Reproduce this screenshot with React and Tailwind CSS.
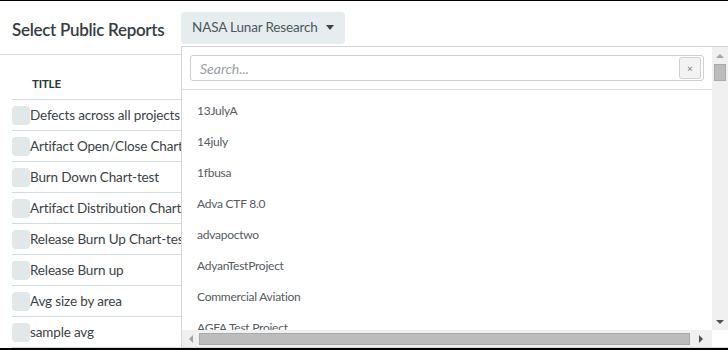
import React from "react";

const rows = [
  "Defects across all projects",
  "Artifact Open/Close Chart",
  "Burn Down Chart-test",
  "Artifact Distribution Chart",
  "Release Burn Up Chart-test",
  "Release Burn up",
  "Avg size by area",
  "sample avg",
];

const items = [
  "13JulyA",
  "14july",
  "1fbusa",
  "Adva CTF 8.0",
  "advapoctwo",
  "AdyanTestProject",
  "Commercial Aviation",
  "AGFA Test Project",
];

const font = { fontFamily: "Lato, 'Open Sans', 'Liberation Sans', sans-serif" };

export default function App() {
  return (
    <div
      className="relative w-[728px] h-[350px] overflow-hidden bg-white border-t border-b-2 border-black"
      style={font}
    >
      {/* header */}
      <div className="flex items-center h-[54px] border-b border-[#d3dde0] pl-3">
        <div className="w-[169px] pt-[3px] text-[17px] tracking-[-0.3px] font-semibold text-[#363d42] leading-none">
          Select Public Reports
        </div>
        <div className="flex items-center justify-between w-[164px] h-8 rounded bg-[#e5edef] pl-[11px] pr-[11px] text-[13.5px] tracking-[-0.15px] text-[#4d565b]">
          <span>NASA Lunar Research</span>
          <svg width="8" height="5" viewBox="0 0 8 5">
            <path d="M0 0 L8 0 L4 5 Z" fill="#3d4449" />
          </svg>
        </div>
      </div>

      {/* table */}
      <div className="pl-3">
        <div className="flex items-end h-[45px] pb-[7px] border-b border-[#d3dde0] pl-5 text-[11.5px] tracking-[-0.2px] font-bold text-[#2f3539]">
          TITLE
        </div>
        {rows.map((r) => (
          <div key={r} className="flex items-center h-[31px] border-b border-[#d3dde0]">
            <div className="w-[18px] h-[19px] rounded-sm bg-[#e1e8ea]" />
            <span className="text-[13.5px] tracking-[-0.15px] text-[#3a4247] whitespace-nowrap">{r}</span>
          </div>
        ))}
      </div>

      {/* dropdown panel */}
      <div className="absolute left-[181px] top-[45px] w-[547px] h-[302px] bg-white border border-[#d6d6d6] border-r-0 flex flex-col">
        <div className="flex flex-1 min-h-0">
          <div className="flex-1 flex flex-col min-w-0">
            <div className="h-[43px] border-b border-[#dcdcdc] pl-2 pr-[8px] pt-2">
              <div className="flex items-center h-[26px] border border-[#cfcfcf] rounded-[3px] pl-[9px] pr-[2px]">
                <span className="flex-1 text-[14px] italic text-[#9aa0a4]">Search...</span>
                <div className="flex items-center justify-center w-[22px] h-[22px] rounded-[3px] border border-[#d0d0d0] bg-[#f3f3f3] text-[10px] leading-none text-[#7a6f86]">
                  ×
                </div>
              </div>
            </div>
            <div className="flex-1 min-h-0 overflow-hidden pt-[5px] pl-[15px]">
              {items.map((t) => (
                <div key={t} className="h-[31px] flex items-center text-[12px] tracking-[-0.25px] text-[#555b5f] whitespace-nowrap">
                  {t}
                </div>
              ))}
            </div>
          </div>
          {/* vertical scrollbar */}
          <div className="w-4 bg-[#f0f0f0] flex flex-col items-center">
            <div className="h-[17px] flex items-center justify-center">
              <svg width="8" height="4" viewBox="0 0 8 4">
                <path d="M0 4 L8 4 L4 0 Z" fill="#a3a3a3" />
              </svg>
            </div>
            <div className="w-3 h-[17px] bg-[#bcbcbc] border border-[#a9a9a9]" />
            <div className="flex-1" />
            <div className="h-[17px] flex items-center justify-center">
              <svg width="8" height="4" viewBox="0 0 8 4">
                <path d="M0 0 L8 0 L4 4 Z" fill="#505050" />
              </svg>
            </div>
          </div>
        </div>
        {/* horizontal scrollbar */}
        <div className="flex h-[17px]">
          <div className="flex-1 bg-[#f0f0f0] flex items-center">
            <div className="w-[17px] flex items-center justify-center">
              <svg width="4" height="8" viewBox="0 0 4 8">
                <path d="M4 0 L4 8 L0 4 Z" fill="#a3a3a3" />
              </svg>
            </div>
            <div className="flex-1 h-3 bg-[#bcbcbc] border border-[#a9a9a9]" />
            <div className="w-[22px] flex items-center justify-center">
              <svg width="4" height="8" viewBox="0 0 4 8">
                <path d="M0 0 L0 8 L4 4 Z" fill="#505050" />
              </svg>
            </div>
          </div>
          <div className="w-4 bg-white" />
        </div>
      </div>
    </div>
  );
}
